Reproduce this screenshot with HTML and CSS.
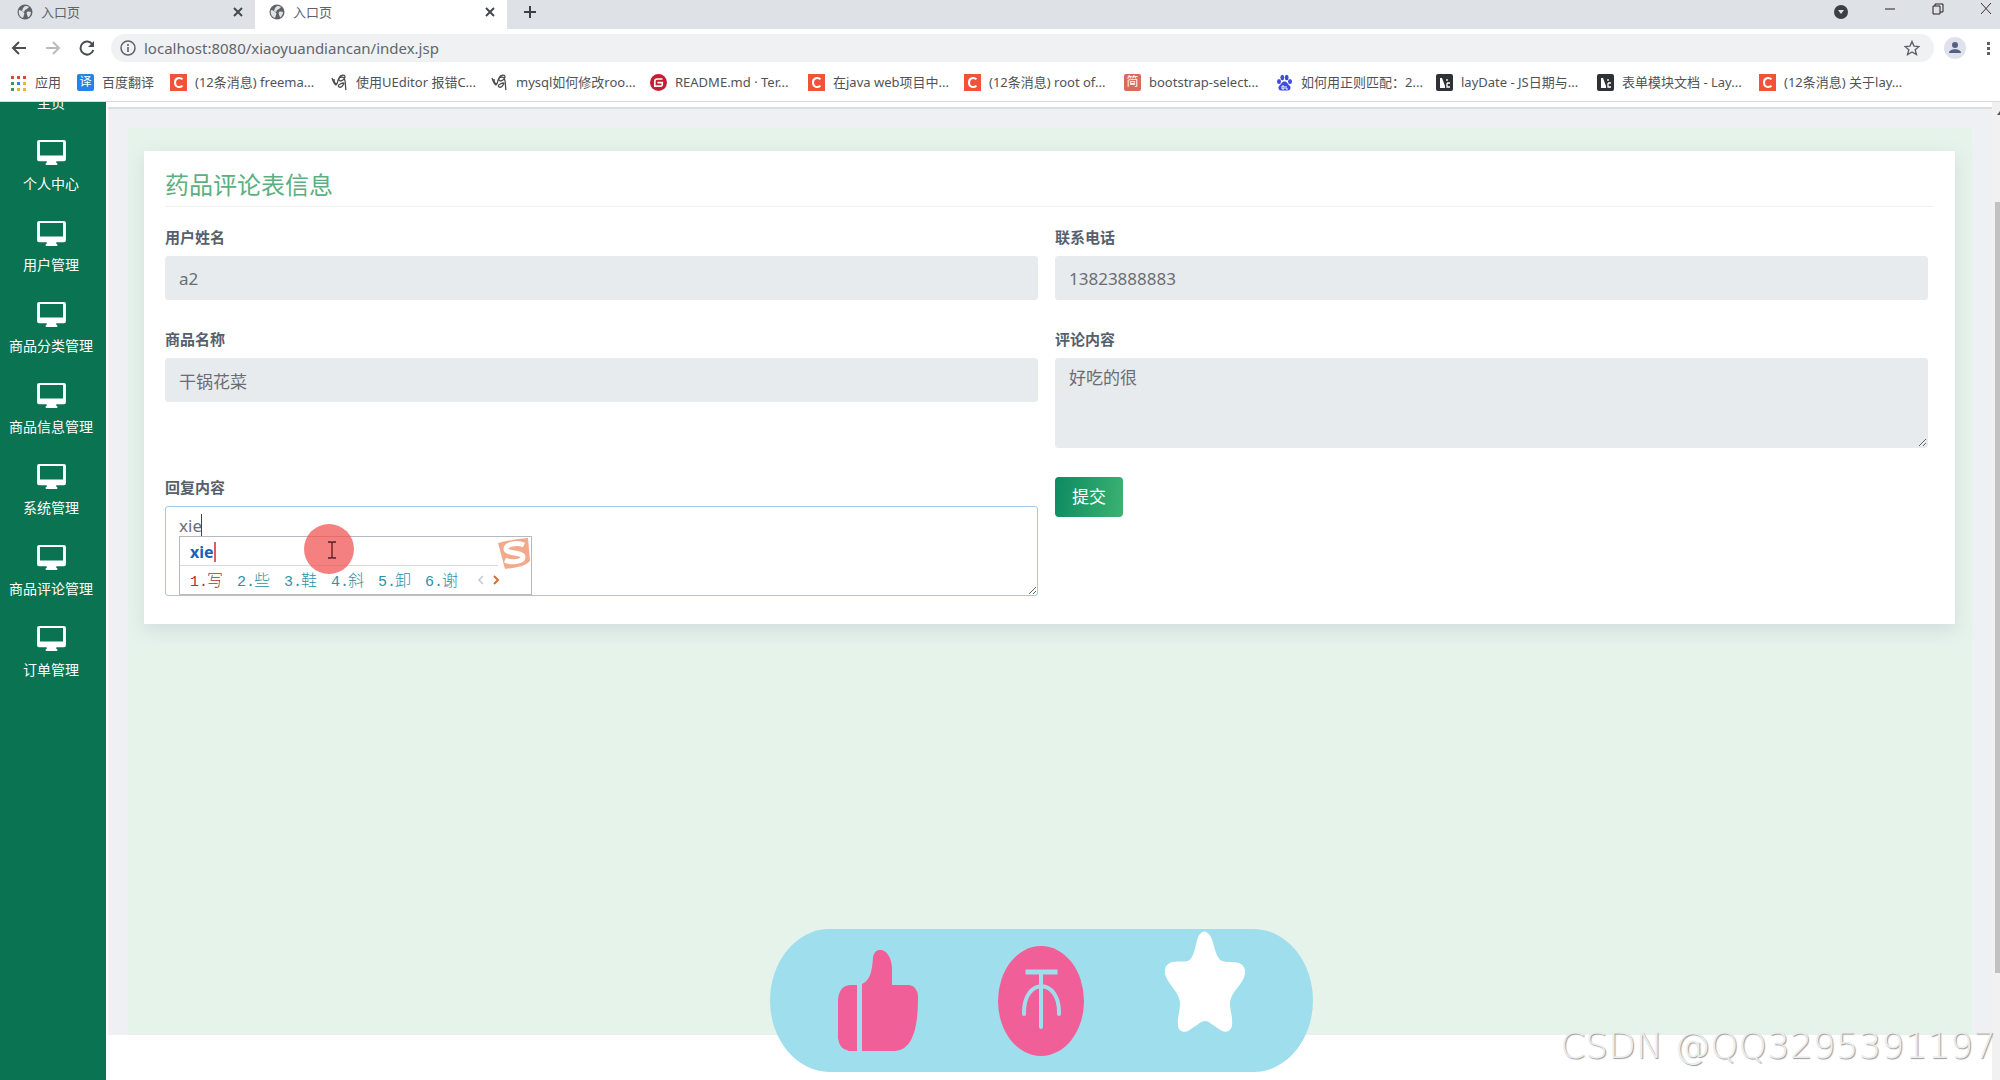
FILE: index.html
```html
<!DOCTYPE html>
<html lang="zh-CN">
<head>
<meta charset="utf-8">
<title>入口页</title>
<link rel="stylesheet" href="styles.css">
</head>
<body>
<svg class="defs" aria-hidden="true">
  <symbol id="globe" viewBox="0 0 16 16"><circle cx="8" cy="8" r="7.5" fill="#5f6368"/><path d="M2 6c2 0 3 1 4 2s2 1 1 3l-1 3C3 13 1 10 2 6zM8 2c2 0 3 0 4 1l-2 2-2 1-1 2-2-1 1-3zM10 8c2-1 3 0 4 0-.2 3-1.500 4.500-3 5.500 0-2-2-3-1-5.500z" fill="#dee1e6"/></symbol>
  <symbol id="cross" viewBox="0 0 10 10"><path d="M1 1l8 8M9 1l-8 8" stroke="#45494d" stroke-width="2" fill="none"/></symbol>
  <symbol id="csdn" viewBox="0 0 17 17"><path d="M0 0h17v17H0z" fill="#f0533a"/><path d="M12.500 5.300C10 3.200 5 3.500 5 8.600s5 5.200 7.500 3.100" stroke="#fff" stroke-width="2" fill="none"/></symbol>
  <symbol id="sketch" viewBox="0 0 17 17"><path d="M1 4c1 3 2 6 4 7 2-1 1-4 3-7 1-3 6-4 6-1s-5 5-6 3 3-4 5-2c2 3 1 8 2 12M3 5c0 3 1 5 3 5M13 9c-4 0-7 3-5 4s4-1 5-4" stroke="#4b4b4b" stroke-width="1.300" fill="none"/></symbol>
  <symbol id="lay" viewBox="0 0 17 17"><rect width="17" height="17" rx="2" fill="#2f3136"/><path d="M4 4h2l3 8v2H4z" fill="#fff"/><path d="M11 5v2M11 9v4h3M11 9h3" stroke="#fff" stroke-width="1.300" fill="none"/></symbol>
  <symbol id="monitor" viewBox="0 0 30 26"><path fill-rule="evenodd" d="M2 0h26a2 2 0 0 1 2 2v18a2 2 0 0 1-2 2h-8v2h1v2H9v-2h1v-2H2a2 2 0 0 1-2-2V2a2 2 0 0 1 2-2zm1 2v14h24V2z" fill="#fff"/></symbol>
</svg>

<header class="browser">
  <div class="tabs">
    <button class="tab"><svg class="i16"><use href="#globe"/></svg><span>入口页</span><svg class="i10"><use href="#cross"/></svg></button>
    <button class="tab active"><svg class="i16"><use href="#globe"/></svg><span>入口页</span><svg class="i10"><use href="#cross"/></svg></button>
    <button class="add" aria-label="新建标签页"><svg class="i12" viewBox="0 0 12 12"><path d="M6 0v12M0 6h12" stroke="#3c4043" stroke-width="2"/></svg></button>
    <div class="window-tools">
      <button aria-label="搜索标签页"><svg class="i14" viewBox="0 0 14 14"><circle cx="7" cy="7" r="7" fill="#3c4043"/><path d="M4 5h6l-3 4z" fill="#dee1e6"/></svg></button>
      <button aria-label="最小化"><svg class="i12" viewBox="0 0 12 12"><path d="M1 6h10" stroke="#222"/></svg></button>
      <button aria-label="还原"><svg class="i12" viewBox="0 0 12 12"><path d="M1 3h7v8H1zM3 3V1h8v8H8" stroke="#222" fill="none"/></svg></button>
      <button aria-label="关闭"><svg class="i12" viewBox="0 0 12 12"><path d="M1 0l10 11M11 0L1 11" stroke="#333"/></svg></button>
    </div>
  </div>
  <div class="toolbar">
    <button aria-label="后退"><svg class="i16" viewBox="0 0 16 16"><path d="M15 8H2M8 2L2 8l6 6" stroke="#4a4d51" stroke-width="2" fill="none"/></svg></button>
    <button aria-label="前进"><svg class="i16" viewBox="0 0 16 16"><path d="M1 8h13M8 2l6 6-6 6" stroke="#b9bbbe" stroke-width="2" fill="none"/></svg></button>
    <button aria-label="刷新"><svg class="i16" viewBox="0 0 16 16"><path d="M13.500 4.500A6.500 6.500 0 1 0 14.300 10" stroke="#4a4d51" stroke-width="2" fill="none"/><path d="M15 1v6H9z" fill="#4a4d51"/></svg></button>
    <div class="omnibox">
      <svg class="i16" viewBox="0 0 16 16"><circle cx="8" cy="8" r="7" stroke="#5f6368" stroke-width="1.500" fill="none"/><path d="M8 7v5M8 4v2" stroke="#5f6368" stroke-width="1.600"/></svg>
      <input type="text" aria-label="地址" value="localhost:8080/xiaoyuandiancan/index.jsp">
      <button aria-label="收藏"><svg class="i16" viewBox="0 0 16 16"><path d="M8 1.500l2 4.600 5 .4-3.800 3.200 1.200 4.800L8 12l-4.400 2.500 1.200-4.800L1 6.500l5-.4z" stroke="#5f6368" stroke-width="1.400" fill="none"/></svg></button>
    </div>
    <button class="profile" aria-label="用户"><svg class="i22" viewBox="0 0 22 22"><circle cx="11" cy="11" r="11" fill="#dfe2ec"/><circle cx="11" cy="8" r="3" fill="#565f80"/><path d="M5 16c0-5 12-5 12 0z" fill="#565f80"/></svg></button>
    <button class="more" aria-label="菜单"><svg class="i16" viewBox="0 0 16 16"><path d="M7 2h3v3H7zM7 7h3v3H7zM7 12h3v3H7z" fill="#5f6368"/></svg></button>
  </div>
  <nav class="bookmarks">
    <a href="#"><svg class="i17" viewBox="0 0 17 17"><path d="M1 2h3v3H1zM7 2h3v3H7zM13 2h3v3h-3z" fill="#d9483b"/><path d="M1 8h3v3H1z" fill="#2f9e57"/><path d="M7 8h3v3H7z" fill="#3b7de0"/><path d="M13 8h3v3h-3zM7 14h3v3H7zM13 14h3v3h-3z" fill="#e8b730"/><path d="M1 14h3v3H1z" fill="#2f9e57"/></svg>应用</a>
    <a href="#"><span class="badge blue">译</span>百度翻译</a>
    <a href="#"><svg class="i17"><use href="#csdn"/></svg>(12条消息) freema...</a>
    <a href="#"><svg class="i17"><use href="#sketch"/></svg>使用UEditor 报错C...</a>
    <a href="#"><svg class="i17"><use href="#sketch"/></svg>mysql如何修改roo...</a>
    <a href="#"><svg class="i17" viewBox="0 0 17 17"><circle cx="8.500" cy="8.500" r="8.500" fill="#c71d33"/><path d="M12.500 5H7.500C5 5 4.800 6 4.800 8v4.200h5.500c2 0 2-1 2-3.500H7.500" stroke="#fff" stroke-width="1.700" fill="none"/></svg>README.md · Ter...</a>
    <a href="#"><svg class="i17"><use href="#csdn"/></svg>在java web项目中...</a>
    <a href="#"><svg class="i17"><use href="#csdn"/></svg>(12条消息) root of...</a>
    <a href="#"><span class="badge red">简</span>bootstrap-select...</a>
    <a href="#"><svg class="i17" viewBox="0 0 17 17"><g fill="#3f4be0"><ellipse cx="3" cy="7.500" rx="2" ry="2.600"/><ellipse cx="6.300" cy="3.500" rx="1.900" ry="2.700"/><ellipse cx="10.700" cy="3.500" rx="1.900" ry="2.700"/><ellipse cx="14" cy="7.500" rx="2" ry="2.600"/><path d="M8.500 7.500c2.500 0 3 2.500 5 4s1 5-1.500 5H5c-2.500 0-3.500-3.500-1.500-5s2.500-4 5-4z"/></g><path d="M6 12h2v3H6zM10 12v3h2" stroke="#fff" fill="none"/></svg>如何用正则匹配：2...</a>
    <a href="#"><svg class="i17"><use href="#lay"/></svg>layDate - JS日期与...</a>
    <a href="#"><svg class="i17"><use href="#lay"/></svg>表单模块文档 - Lay...</a>
    <a href="#"><svg class="i17"><use href="#csdn"/></svg>(12条消息) 关于lay...</a>
  </nav>
</header>

<div class="page">
  <nav class="sidebar">
    <ul>
      <li><a href="#"><svg><use href="#monitor"/></svg>主页</a></li>
      <li><a href="#"><svg><use href="#monitor"/></svg>个人中心</a></li>
      <li><a href="#"><svg><use href="#monitor"/></svg>用户管理</a></li>
      <li><a href="#"><svg><use href="#monitor"/></svg>商品分类管理</a></li>
      <li><a href="#"><svg><use href="#monitor"/></svg>商品信息管理</a></li>
      <li><a href="#"><svg><use href="#monitor"/></svg>系统管理</a></li>
      <li><a href="#"><svg><use href="#monitor"/></svg>商品评论管理</a></li>
      <li><a href="#"><svg><use href="#monitor"/></svg>订单管理</a></li>
    </ul>
  </nav>
  <main class="main">
    <div class="topline"></div>
    <div class="frame">
      <div class="content">
        <form class="card">
          <h3>药品评论表信息</h3>
          <div class="fields">
            <div class="field"><label for="name">用户姓名</label><input id="name" type="text" value="a2" readonly></div>
            <div class="field"><label for="phone">联系电话</label><input id="phone" type="text" value="13823888883" readonly></div>
            <div class="field"><label for="goods">商品名称</label><input id="goods" type="text" value="干锅花菜" readonly></div>
            <div class="field"><label for="comment">评论内容</label><textarea id="comment" readonly>好吃的很</textarea></div>
            <div class="field reply">
              <label for="reply">回复内容</label><textarea id="reply">xie</textarea>
              <i class="caret"></i>
              <div class="ime">
                <div class="typed">xie</div>
                <ol>
                  <li class="first"><b>1.</b>写</li><li><b>2.</b>些</li><li><b>3.</b>鞋</li><li><b>4.</b>斜</li><li><b>5.</b>卸</li><li><b>6.</b>谢</li>
                </ol>
                <svg class="pager" viewBox="0 0 24 10"><path d="M6 1L2 5l4 4" stroke="#c4c8cc" stroke-width="1.500" fill="none"/><path d="M17 1l4 4-4 4" stroke="#dc6a38" stroke-width="2" fill="none"/></svg>
                <svg class="sogou" viewBox="0 0 34 34"><path d="M1 6Q16 2 31 1l2 23q-4 4-8 5-8 2-17 3z" fill="#f3a98b"/><path d="M27 8C20 5 9 7 9 12s17 3 17 8-12 6-18 3" stroke="#fff" stroke-width="5" fill="none"/></svg>
              </div>
              <svg class="pointer" viewBox="0 0 50 50"><circle cx="25" cy="25" r="25" fill="#f15555" fill-opacity=".75"/><path d="M24 18h3l1 1 1-1h3M24 34h3l1-1 1 1h3M28 19v14" stroke="#5a1b22" stroke-width="1.300" fill="none"/></svg>
            </div>
            <div class="actions"><button type="submit">提交</button></div>
          </div>
        </form>
      </div>
    </div>
  </main>
  <div class="scrollbar" aria-hidden="true"><i class="up"></i><i class="thumb"></i><i class="down"></i></div>
</div>

<div class="reactions">
  <button aria-label="点赞"><svg width="80" height="102" viewBox="0 0 80 102"><path d="M0 50Q1 36 12 35h7v66h-8Q1 99 0 88zM24 34c9-4 10-15 11-26C36-4 52-4 54 17v18h17q8 1 9 11c0 22-2 34-7 44q-5 10-16 11H24z" fill="#f15f98"/></svg></button>
  <button aria-label="投币"><svg width="88" height="110" viewBox="0 0 88 110"><ellipse cx="43" cy="55" rx="43" ry="55" fill="#f15f98"/><g stroke="#9fdeec" fill="none" stroke-linecap="round"><path d="M30 26h27" stroke-width="5" stroke-linecap="square"/><path d="M43 28v53M26 68c-1-37 36-37 35 0" stroke-width="4"/></g></svg></button>
  <button class="star" aria-label="收藏"><svg width="80" height="102" viewBox="0 0 80 102"><path d="M33 6q6-11 13 0c4 10 5 22 11 24s11 0 17 2q7 3 6 11c-2 11-13 16-15 28 0 11 3 14 2 24-2 7-8 7-13 3-5-3-10-8-14-8s-9 5-14 8c-6 5-12 3-13-3-1-9 2-13 2-24C13 59 3 54 0 43c-1-8 3-11 8-12 7-1 11 0 15-1 6-3 7-14 10-24z" fill="#fff"/></svg></button>
</div>
<div class="watermark">CSDN @QQ3295391197</div>
</body>
</html>
```

FILE: styles.css
```css
* { box-sizing: border-box; }
body {
  margin: 0;
  min-height: 100vh;
  display: flex;
  flex-direction: column;
  font-family: "Noto Sans", "Noto Sans CJK SC", sans-serif;
  background: #fff;
  overflow: hidden;
}
button { border: 0; padding: 0; background: none; font: inherit; color: inherit; }
a { color: inherit; text-decoration: none; }
svg { display: block; flex: none; }
.defs { position: absolute; width: 0; height: 0; }
.i10 { width: 10px; height: 10px; }
.i12 { width: 12px; height: 12px; }
.i14 { width: 14px; height: 14px; }
.i16 { width: 16px; height: 16px; }
.i17 { width: 17px; height: 17px; }
.i22 { width: 22px; height: 22px; }

/* browser window */
.browser { flex: none; border-bottom: 1px solid #d9dbdd; }
.tabs { display: flex; height: 29px; background: #dee1e6; }
.tab {
  display: flex;
  align-items: center;
  gap: 8px;
  width: 252px;
  padding: 0 12px 5px 14px;
  font-size: 13px;
  line-height: 20px;
  color: #5f6368;
}
.tab span { flex: 1; text-align: left; }
.tab.active { background: #fff; }
.tab:first-child { width: 255px; padding-left: 17px; }
.add { display: flex; padding: 6px 17px; }
.window-tools { display: flex; gap: 36px; margin-left: auto; padding: 3px 8px 0 0; align-items: flex-start; }
.window-tools button:first-child { padding-top: 2px; }
.toolbar { display: flex; align-items: center; gap: 18px; height: 38px; padding: 0 4px 0 11px; }
.omnibox {
  flex: 1;
  display: flex;
  align-items: center;
  gap: 8px;
  height: 28px;
  margin-left: -2px;
  padding: 0 14px 0 9px;
  border-radius: 14px;
  background: #eff1f3;
}
.omnibox input { flex: 1; border: 0; padding: 0; background: none; font: 15px/20px "Noto Sans", sans-serif; color: #63666a; outline: 0; }
.profile { margin-left: -8px; }
.more { margin-left: -4px; }
.bookmarks {
  display: grid;
  grid-template-columns: 67px 93px 161px 160px 159px 158px 156px 160px 152px 160px 161px 162px 1fr;
  align-items: center;
  height: 34px;
  padding-bottom: 4px;
  padding-left: 10px;
}
.bookmarks a { display: flex; align-items: center; gap: 8px; font-size: 13px; line-height: 20px; color: #505356; white-space: nowrap; }
.badge { width: 17px; height: 17px; border-radius: 2px; color: #fff; font-size: 12px; line-height: 16px; text-align: center; }
.blue { background: #2483ea; }
.red { background: #dc6a5c; }

/* site */
.page { flex: 1; display: flex; min-height: 0; }
.sidebar { flex: none; width: 106px; padding-right: 4px; background: #0a7351; overflow: hidden; }
.sidebar ul { list-style: none; margin: -43px 0 0; padding: 0; }
.sidebar li { height: 81px; }
.sidebar a { display: flex; flex-direction: column; align-items: center; gap: 9px; font-size: 14px; line-height: 20px; color: #fff; white-space: nowrap; }
.sidebar svg { width: 29px; height: 25px; }
.main { flex: 1; display: flex; flex-direction: column; padding-bottom: 45px; border-left: 2px solid #fff; }
.topline { height: 7px; border-bottom: 2px solid #dcdddf; }
.frame { flex: 1; display: flex; padding: 19px 20px 0; background: #eff0f4; }
.content { flex: 1; padding: 23px 17px 0 16px; background: #e6f3eb; }
.card { padding: 17px 21px 28px; background: #fff; box-shadow: 0 6px 16px rgba(150, 165, 190, .28); }
.card h3 { margin: 0 0 20px; padding-bottom: 5px; border-bottom: 1px solid #eef0f1; font-size: 24px; line-height: 33px; font-weight: 400; color: #5bb080; }
.fields { display: grid; grid-template-columns: 1fr 1fr; gap: 29px 17px; padding-right: 6px; }
.field { position: relative; display: flex; flex-direction: column; gap: 9px; }
.field label { font-size: 15px; line-height: 20px; font-weight: 700; color: #56606c; }
.field input, .field textarea {
  display: block;
  width: 100%;
  height: 44px;
  margin: 0;
  padding: 6px 13px;
  border: 1px solid #e8ebee;
  border-radius: 3px;
  background: #e8ebed;
  font: 17px/26px "Noto Sans", "Noto Sans CJK SC", sans-serif;
  color: #6a6e74;
  outline: 0;
}
.field textarea { height: 90px; resize: vertical; }
.field #reply { background: #fff; border-color: #a8c8e2; }
.actions button {
  width: 68px;
  height: 40px;
  border-radius: 4px;
  background: linear-gradient(100deg, #0c8a62, #3cb371);
  color: #fff;
  font-size: 17px;
  line-height: 24px;
}

/* input method window and pointer */
.caret { position: absolute; left: 36px; top: 37px; width: 1px; height: 22px; background: #444; }
.ime { position: absolute; left: 14px; top: 59px; width: 353px; height: 59px; border: 1px solid #b6b9bf; background: #fff; }
.typed { width: fit-content; height: 20px; margin: 5px 0 0 10px; border-right: 2px solid #e35b5b; font-size: 16px; line-height: 20px; font-weight: 700; color: #1c62b4; }
.ime ol { display: flex; width: 318px; margin: 3px 0 0; padding: 1px 0 0 10px; border-top: 1px solid #d8dadd; list-style: none; }
.ime li { flex: none; display: flex; align-items: baseline; width: 47px; font: 300 16px/24px "Noto Sans CJK SC", sans-serif; color: #2a92a8; }
.ime li b { width: 17px; font: 15px/22px "Liberation Mono", monospace; }
.ime .first { color: #b8292f; }
.pager { position: absolute; left: 297px; top: 38px; width: 24px; height: 10px; }
.sogou { position: absolute; right: 0; top: 0; width: 34px; height: 34px; }
.pointer { position: absolute; left: 139px; top: 47px; width: 50px; height: 50px; }

.scrollbar { flex: none; display: flex; flex-direction: column; width: 8px; padding-left: 3px; background: #f1f1f1; }
.up { height: 100px; }
.up::before { content: ""; display: block; margin: 9px 0 0 2px; border: solid transparent; border-width: 0 0 4px 3px; border-bottom-color: #555; }
.thumb { flex: 1; background: #c1c1c1; }
.down { height: 107px; }

/* overlays */
.reactions {
  position: absolute;
  left: 50%;
  bottom: 8px;
  margin-left: -230px;
  display: flex;
  align-items: center;
  justify-content: space-between;
  width: 543px;
  height: 143px;
  padding: 0 68px;
  border-radius: 60px / 72px;
  background: #9fdeec;
}
.star { align-self: flex-start; padding-top: 2px; }
.watermark {
  position: absolute;
  right: 4px;
  bottom: 12px;
  font: 200 36px/44px "DejaVu Sans", sans-serif;
  color: #eceeee;
  text-shadow: 1px 1px 1px #999;
  white-space: nowrap;
}
```
